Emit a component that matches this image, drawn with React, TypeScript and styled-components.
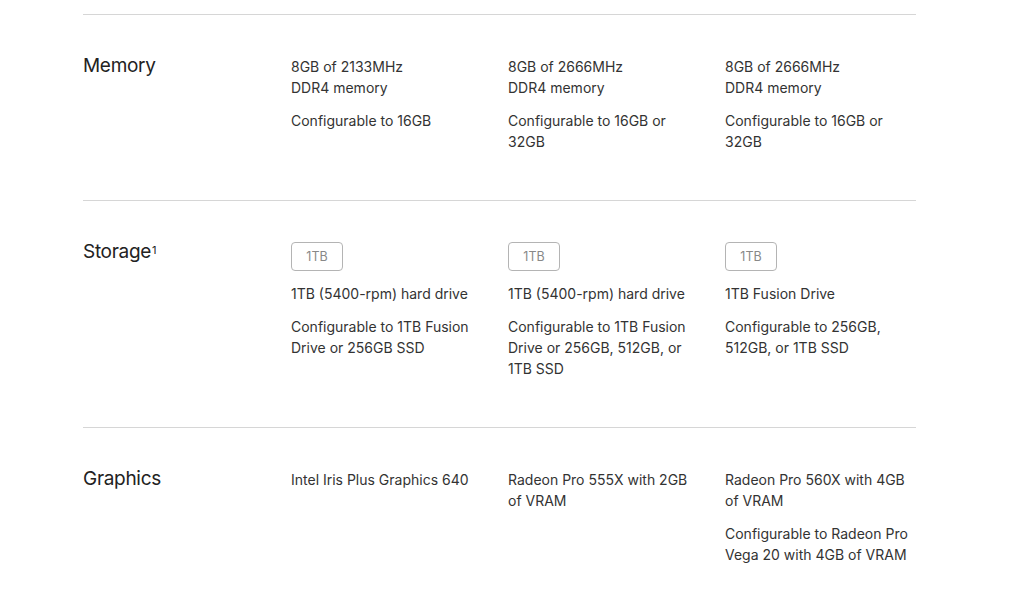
import React from "react";
import styled, { createGlobalStyle } from "styled-components";

const Global = createGlobalStyle`
  html, body { margin: 0; padding: 0; background: #fff; }
  body { font-family: Inter, Roboto, "Liberation Sans", Arial, sans-serif; color: #333; -webkit-font-smoothing: antialiased; }
`;

const Page = styled.div`
  width: 833px;
  margin: 14px 0 0 83px;
`;

const Section = styled.section`
  display: grid;
  grid-template-columns: 208px 217px 217px 1fr;
  border-top: 1px solid #d6d6d6;
  padding: 41px 0 48px;
`;

const Label = styled.h2`
  margin: -2px 0 0;
  font-size: 19px;
  line-height: 23px;
  font-weight: 400;
  color: #222;
  letter-spacing: -0.3px;
  sup { font-size: 11px; vertical-align: top; position: relative; top: -1px; margin-left: 1px; }
`;

const Column = styled.div`
  min-width: 0;
`;

const Text = styled.p`
  margin: 0 0 12px;
  font-size: 14px;
  line-height: 21px;
  color: #333;
  white-space: pre-line;
  &:last-child { margin-bottom: 0; }
`;

const Badge = styled.div`
  box-sizing: border-box;
  width: 52px;
  height: 29px;
  border: 1px solid #b4b4b4;
  border-radius: 4px;
  display: flex;
  align-items: center;
  justify-content: center;
  font-size: 12.5px;
  color: #888;
  margin-bottom: 12px;
`;

type Spec = { badge?: string; lines: string[] };
type Row = { label: React.ReactNode; cols: Spec[] };

const rows: Row[] = [
  {
    label: "Memory",
    cols: [
      { lines: ["8GB of 2133MHz\nDDR4 memory", "Configurable to 16GB"] },
      { lines: ["8GB of 2666MHz\nDDR4 memory", "Configurable to 16GB or\n32GB"] },
      { lines: ["8GB of 2666MHz\nDDR4 memory", "Configurable to 16GB or\n32GB"] },
    ],
  },
  {
    label: (
      <>
        Storage<sup>1</sup>
      </>
    ),
    cols: [
      { badge: "1TB", lines: ["1TB (5400-rpm) hard drive", "Configurable to 1TB Fusion\nDrive or 256GB SSD"] },
      { badge: "1TB", lines: ["1TB (5400-rpm) hard drive", "Configurable to 1TB Fusion\nDrive or 256GB, 512GB, or\n1TB SSD"] },
      { badge: "1TB", lines: ["1TB Fusion Drive", "Configurable to 256GB,\n512GB, or 1TB SSD"] },
    ],
  },
  {
    label: "Graphics",
    cols: [
      { lines: ["Intel Iris Plus Graphics 640"] },
      { lines: ["Radeon Pro 555X with 2GB\nof VRAM"] },
      { lines: ["Radeon Pro 560X with 4GB\nof VRAM", "Configurable to Radeon Pro\nVega 20 with 4GB of VRAM"] },
    ],
  },
];

export default function App() {
  return (
    <>
      <Global />
      <Page>
        {rows.map((r, i) => (
          <Section key={i}>
            <Label>{r.label}</Label>
            {r.cols.map((c, j) => (
              <Column key={j}>
                {c.badge && <Badge>{c.badge}</Badge>}
                {c.lines.map((l, k) => (
                  <Text key={k}>{l}</Text>
                ))}
              </Column>
            ))}
          </Section>
        ))}
      </Page>
    </>
  );
}
